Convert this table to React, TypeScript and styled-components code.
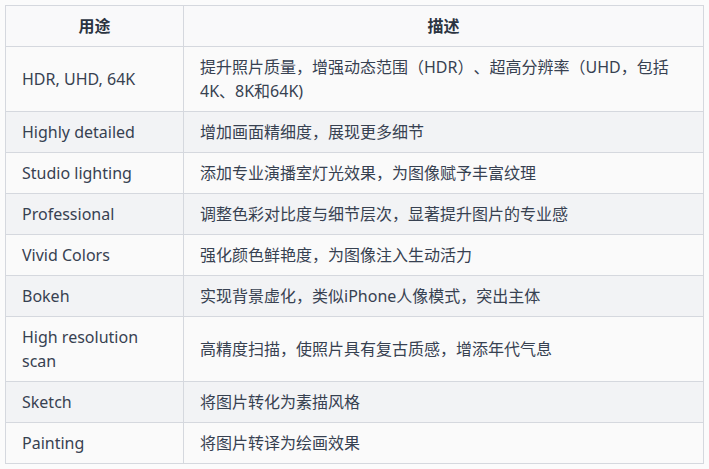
import React from "react";
import styled, { createGlobalStyle } from "styled-components";

const GlobalStyle = createGlobalStyle`
  html, body {
    margin: 0;
    padding: 0;
    background: #fbfbfb;
  }
  body {
    font-family: "Noto Sans", "Noto Sans CJK SC", sans-serif;
    color: #374151;
    text-spacing-trim: space-all;
  }
`;

const rows: [string, string][] = [
  ["HDR, UHD, 64K", "提升照片质量，增强动态范围（HDR）、超高分辨率（UHD，包括4K、8K和64K)"],
  ["Highly detailed", "增加画面精细度，展现更多细节"],
  ["Studio lighting", "添加专业演播室灯光效果，为图像赋予丰富纹理"],
  ["Professional", "调整色彩对比度与细节层次，显著提升图片的专业感"],
  ["Vivid Colors", "强化颜色鲜艳度，为图像注入生动活力"],
  ["Bokeh", "实现背景虚化，类似iPhone人像模式，突出主体"],
  ["High resolution scan", "高精度扫描，使照片具有复古质感，增添年代气息"],
  ["Sketch", "将图片转化为素描风格"],
  ["Painting", "将图片转译为绘画效果"],
];

const Page = styled.div`
  padding: 5px 5px 0 5px;
`;

const Table = styled.table`
  width: 699px;
  border-collapse: collapse;
  table-layout: fixed;
  font-size: 16px;
  line-height: 24px;
`;

const HeadCell = styled.th`
  background: #f9f9fa;
  border: 1px solid #d5d8de;
  padding: 8px 16px;
  font-weight: 700;
  color: #2b3441;
  text-align: center;
`;

const Row = styled.tr<{ $striped: boolean }>`
  background: ${(p) => (p.$striped ? "#f2f3f5" : "#fafafa")};
`;

const Cell = styled.td`
  border: 1px solid #d5d8de;
  padding: 8px 16px;
  vertical-align: middle;
  text-align: left;
`;

export default function App() {
  return (
    <Page>
      <GlobalStyle />
      <Table>
        <colgroup>
          <col style={{ width: 178 }} />
          <col />
        </colgroup>
        <thead>
          <tr>
            <HeadCell>用途</HeadCell>
            <HeadCell>描述</HeadCell>
          </tr>
        </thead>
        <tbody>
          {rows.map(([use, desc], i) => (
            <Row key={use} $striped={i % 2 === 1}>
              <Cell>{use}</Cell>
              <Cell>{desc}</Cell>
            </Row>
          ))}
        </tbody>
      </Table>
    </Page>
  );
}
